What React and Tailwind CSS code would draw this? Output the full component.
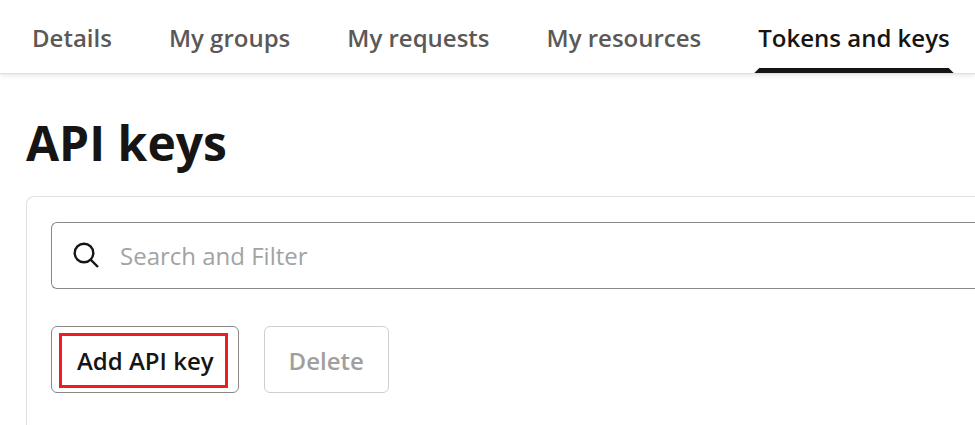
const tabs = ["Details", "My groups", "My requests", "My resources", "Tokens and keys"];

export default function App() {
  return (
    <div className="flex min-h-screen flex-col bg-white font-['Open_Sans',sans-serif] text-[#161513]">
      <nav className="h-[73px] pl-8 shadow-[0_1px_0_#e0e0e0,0_2px_5px_rgba(0,0,0,0.12)]">
        <ul className="flex h-full gap-[57px] whitespace-nowrap text-2xl font-semibold">
          {tabs.map((tab) => (
            <li key={tab} className="relative flex">
              <a
                href="#"
                aria-current={tab === "Tokens and keys" ? "page" : undefined}
                className={
                  tab === "Tokens and keys"
                    ? "flex items-center pt-0.5 text-[#161513]"
                    : "flex items-center pt-0.5 text-[#5b5957]"
                }
              >
                {tab}
              </a>
              {tab === "Tokens and keys" && (
                <span className="absolute -inset-x-1 bottom-0 h-[5px] bg-[#161513] [clip-path:polygon(5px_0,calc(100%-5px)_0,100%_100%,0_100%)]" />
              )}
            </li>
          ))}
        </ul>
      </nav>
      <main className="flex flex-1 flex-col pl-[26px] pt-[36px]">
        <h1 className="text-5xl/[68px] font-bold">API keys</h1>
        <section className="mt-[19px] flex-1 rounded-tl-lg border-l border-t border-[#e1e1e0] pl-6 pt-[25px]">
          <label className="flex h-[67px] items-center gap-5 rounded-l-md border border-r-0 border-[#8b8986] pl-[20px]">
            <svg className="size-[28px]" viewBox="0 0 28 28" fill="none" stroke="#161513" strokeWidth="2.4">
              <circle cx="12" cy="11" r="9.3" />
              <path d="M18.5 17.5l7.5 7.5" />
            </svg>
            <input
              aria-label="Search and Filter"
              placeholder="Search and Filter"
              className="h-full min-w-0 flex-1 text-2xl outline-none placeholder:text-[#a3a3a2]"
            />
          </label>
          <div className="mt-[37px] flex gap-[25px] text-2xl font-semibold">
            <button className="h-[67px] rounded-md border border-[#8b8986] pt-[6px] pr-[10px] pb-1 pl-[7px]">
              <span className="flex h-full items-center border-[3px] border-[#ed1c24] pr-[11px] pl-[15px]">Add API key</span>
            </button>
            <button disabled className="h-[67px] rounded-md border border-[#d0cfcd] px-6 pt-0.5 text-[#a19f9d]">
              Delete
            </button>
          </div>
        </section>
      </main>
    </div>
  );
}
